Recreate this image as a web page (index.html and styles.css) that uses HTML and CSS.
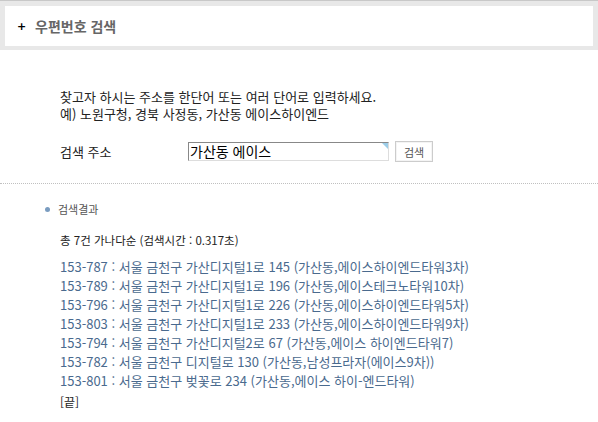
FILE: index.html
```html
<!DOCTYPE html>
<html lang="ko">
<head>
<meta charset="utf-8">
<link rel="stylesheet" href="styles.css">
</head>
<body>
<div class="header">
  <div class="header-box">
    <span class="plus">+</span>
    <h1 class="title">우편번호 검색</h1>
  </div>
</div>
<div class="search">
  <p class="guide">찾고자 하시는 주소를 한단어 또는 여러 단어로 입력하세요.<br>예) 노원구청, 경북 사정동, 가산동 에이스하이엔드</p>
  <div class="form-row">
    <span class="label">검색 주소</span>
    <span class="input"><span class="input-text">가산동 에이스</span><span class="corner"></span></span>
    <span class="btn">검색</span>
  </div>
</div>
<div class="divider"></div>
<div class="results">
  <div class="section-title"><span class="dot"></span>검색결과</div>
  <p class="summary">총 7건 가나다순 (검색시간 : 0.317초)</p>
  <ul class="list">
    <li>153-787 : 서울 금천구 가산디지털1로 145 (가산동,에이스하이엔드타워3차)</li>
    <li>153-789 : 서울 금천구 가산디지털1로 196 (가산동,에이스테크노타워10차)</li>
    <li>153-796 : 서울 금천구 가산디지털1로 226 (가산동,에이스하이엔드타워5차)</li>
    <li>153-803 : 서울 금천구 가산디지털1로 233 (가산동,에이스하이엔드타워9차)</li>
    <li>153-794 : 서울 금천구 가산디지털2로 67 (가산동,에이스 하이엔드타워7)</li>
    <li>153-782 : 서울 금천구 디지털로 130 (가산동,남성프라자(에이스9차))</li>
    <li>153-801 : 서울 금천구 벚꽃로 234 (가산동,에이스 하이-엔드타워)</li>
  </ul>
  <p class="end">[끝]</p>
</div>
</body>
</html>
```
FILE: styles.css
```css
html, body { margin: 0; padding: 0; background: #fff; }
body {
  font-family: "Noto Sans CJK KR", "DejaVu Sans", sans-serif;
  font-size: 13px;
  color: #222;
  width: 598px;
  height: 422px;
  overflow: hidden;
}
.header {
  background: #e8e8e8;
  border-top: 1px solid #c8c8c8;
  padding: 5px 5px 4px 5px;
}
.header-box {
  background: #fff;
  height: 40px;
  display: flex;
  align-items: center;
}
.plus {
  font-family: "DejaVu Sans", sans-serif;
  font-weight: bold;
  font-size: 11px;
  color: #000;
  margin-left: 12px;
  width: 18px;
}
.title {
  margin: 0;
  font-size: 14px;
  font-weight: bold;
  color: #666;
}
.search { padding: 38px 0 0 60px; height: 133px; box-sizing: border-box; }
.guide { margin: 0; line-height: 17px; color: #222; }
.form-row {
  display: flex;
  align-items: center;
  margin-top: 19px;
}
.label { width: 128px; }
.input {
  position: relative;
  width: 199px;
  height: 17px;
  border: 1px solid #ddd;
  border-top-color: #888;
  border-left-color: #888;
  display: flex;
  align-items: center;
  font-size: 14px;
  line-height: 17px;
  color: #000;
}
.input-text { padding-left: 1px; }
.corner {
  position: absolute;
  right: 0;
  top: 0;
  width: 0;
  height: 0;
  border-top: 6px solid #9ccde8;
  border-left: 6px solid transparent;
}
.btn {
  margin-left: 6px;
  width: 36px;
  height: 19px;
  border: 1px solid #ccc;
  box-shadow: inset 0 0 0 1px #f4f4f4;
  display: flex;
  align-items: center;
  justify-content: center;
  font-size: 11px;
  color: #555;
}
.divider {
  height: 0;
  border-top: 1px dotted #c0c0c0;
}
.results { padding: 17px 0 0 45px; }
.section-title {
  display: flex;
  align-items: center;
  color: #555;
  font-size: 11px;
  line-height: 16px;
}
.dot {
  width: 5px;
  height: 5px;
  border-radius: 50%;
  background: #7a9cc0;
  margin-right: 8px;
}
.summary { margin: 15px 0 0 15px; line-height: 17px; font-size: 11.5px; color: #222; }
.list { list-style: none; margin: 8px 0 0 15px; padding: 0; color: #4a6a8e; font-size: 13px; }
.list li { line-height: 19px; white-space: nowrap; }
.end { margin: 3px 0 0 15px; line-height: 17px; font-size: 12px; color: #222; }
```
